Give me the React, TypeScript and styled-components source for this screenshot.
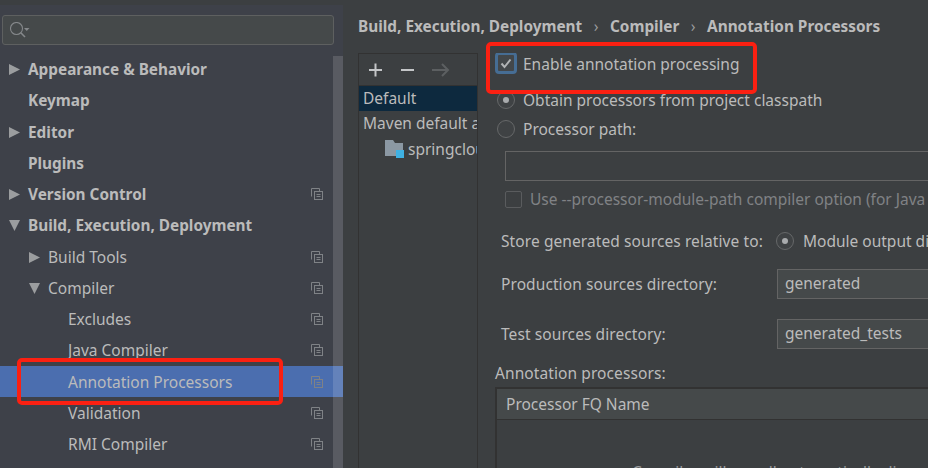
import React from 'react';
import styled, { createGlobalStyle } from 'styled-components';

const GlobalStyle = createGlobalStyle`
  html, body {
    margin: 0;
    padding: 0;
    background: #3c3f41;
  }
  body {
    font-family: "Noto Sans", "Open Sans", sans-serif;
    font-size: 15.5px;
    color: #bbbbbb;
  }
`;

type TreeItem = {
  label: string;
  level: number;
  bold?: boolean;
  arrow?: 'right' | 'down';
  copy?: boolean;
  selected?: boolean;
};

const items: TreeItem[] = [
  { label: 'Appearance & Behavior', level: 0, bold: true, arrow: 'right' },
  { label: 'Keymap', level: 0, bold: true },
  { label: 'Editor', level: 0, bold: true, arrow: 'right' },
  { label: 'Plugins', level: 0, bold: true },
  { label: 'Version Control', level: 0, bold: true, arrow: 'right', copy: true },
  { label: 'Build, Execution, Deployment', level: 0, bold: true, arrow: 'down' },
  { label: 'Build Tools', level: 1, arrow: 'right', copy: true },
  { label: 'Compiler', level: 1, arrow: 'down', copy: true },
  { label: 'Excludes', level: 2, copy: true },
  { label: 'Java Compiler', level: 2, copy: true },
  { label: 'Annotation Processors', level: 2, copy: true, selected: true },
  { label: 'Validation', level: 2, copy: true },
  { label: 'RMI Compiler', level: 2, copy: true },
];

const SearchIcon = () => (
  <svg width="20" height="16" viewBox="0 0 20 16" fill="none">
    <circle cx="6.5" cy="6.5" r="6" stroke="#85888b" strokeWidth="1.1" />
    <path d="M10.8 10.8L15 15" stroke="#85888b" strokeWidth="1.6" />
    <path d="M14 6h5.5l-2.75 3z" fill="#85888b" />
  </svg>
);

const Arrow = ({ dir }: { dir: 'right' | 'down' }) => (
  <svg width="11" height="11" viewBox="0 0 11 11">
    <path d={dir === 'right' ? 'M0 0L11 5.5L0 11z' : 'M0 0H11L5.5 11z'} fill="#9b9d9f" />
  </svg>
);

const CopyIcon = () => (
  <svg width="12" height="12" viewBox="0 0 12 12" fill="none" stroke="#7f8286">
    <path d="M.5 8.5V.5H8.5V3" />
    <rect x="3.5" y="3.5" width="8" height="8" />
    <path d="M5.5 6.5h4M5.5 8.5h4" />
  </svg>
);

const ModuleFolder = () => (
  <FolderSvg width="19" height="18" viewBox="0 0 19 18">
    <path d="M0 0h8l2 3h8v13H0z" fill="#8b98a3" />
    <rect x="11" y="10" width="8" height="8" fill="#3fb1e3" />
  </FolderSvg>
);

const Check = () => (
  <svg width="12" height="11" viewBox="0 0 12 11" fill="none">
    <path d="M1.5 5.5L4.5 9L10.5 1.5" stroke="#b1b3b5" strokeWidth="2" />
  </svg>
);

const App: React.FC = () => (
  <Root>
    <GlobalStyle />
    <Sidebar>
      <SearchBox>
        <SearchIcon />
      </SearchBox>
      <Tree>
        {items.map((item) => (
          <Row key={item.label} $selected={item.selected}>
            <RowLabel $level={item.level} $bold={item.bold}>
              {item.arrow && (
                <ArrowSlot>
                  <Arrow dir={item.arrow} />
                </ArrowSlot>
              )}
              {item.label}
            </RowLabel>
            {item.copy && <CopyIcon />}
          </Row>
        ))}
      </Tree>
      <ScrollThumb />
    </Sidebar>
    <Main>
      <Breadcrumbs>
        <span>Build, Execution, Deployment</span>
        <Sep>›</Sep>
        <span>Compiler</span>
        <Sep>›</Sep>
        <span>Annotation Processors</span>
      </Breadcrumbs>
      <Body>
        <ProfilePanel>
          <Toolbar>
            <svg width="82" height="16" viewBox="0 0 82 16" fill="none">
              <path d="M0 8H13M6.5 1.5V14.5" stroke="#c4c6c8" strokeWidth="2" />
              <path d="M32 8H45" stroke="#c4c6c8" strokeWidth="2" />
              <path d="M63 8H79M73 2L79 8L73 14" stroke="#5c5f61" strokeWidth="2" />
            </svg>
          </Toolbar>
          <ProfileRow $selected>Default</ProfileRow>
          <ProfileRow>Maven default annotation processors</ProfileRow>
          <ModuleRow>
            <ModuleFolder />
            springcloud
          </ModuleRow>
        </ProfilePanel>
        <Form>
          <CheckLine>
            <FocusBox>
              <Check />
            </FocusBox>
            Enable annotation processing
          </CheckLine>
          <RadioGroup>
            <RadioLine>
              <Radio $on />
              Obtain processors from project classpath
            </RadioLine>
            <RadioLine>
              <Radio />
              Processor path:
            </RadioLine>
          </RadioGroup>
          <PathInput />
          <ModulePathLine>
            <SmallBox />
            Use --processor-module-path compiler option (for Java 9 and later)
          </ModulePathLine>
          <StoreLine>
            <FieldLabel>Store generated sources relative to:</FieldLabel>
            <Radio $on />
            <ModuleText>Module output directory</ModuleText>
          </StoreLine>
          <DirLine $top={18}>
            <FieldLabel>Production sources directory:</FieldLabel>
            <DirInput>generated</DirInput>
          </DirLine>
          <DirLine $top={20}>
            <FieldLabel>Test sources directory:</FieldLabel>
            <DirInput>generated_tests</DirInput>
          </DirLine>
          <SectionLabel>Annotation processors:</SectionLabel>
          <Table>
            <TableHead>Processor FQ Name</TableHead>
            <EmptyText>Compiler will run all automatically discovered processors</EmptyText>
          </Table>
        </Form>
      </Body>
    </Main>
    <Marker $x={17} $y={358} $w={266} $h={47} />
    <Marker $x={486} $y={42} $w={271} $h={52} />
  </Root>
);

export default App;

const Root = styled.div`
  position: relative;
  display: flex;
  width: 928px;
  height: 468px;
  overflow: hidden;
  background: #3c3f41;
`;

const Sidebar = styled.div`
  position: relative;
  width: 343px;
  margin-top: 5px;
  padding-top: 10px;
  background: #3e4149;
  flex-shrink: 0;
  box-sizing: border-box;
`;

const SearchBox = styled.div`
  display: flex;
  align-items: center;
  width: 332px;
  height: 30px;
  margin-left: 2px;
  padding-left: 7px;
  box-sizing: border-box;
  background: #45494a;
  border: 1px solid #5e6060;
  border-radius: 3px;
`;

const Tree = styled.div`
  padding-top: 8.4px;
`;

const Row = styled.div<{ $selected?: boolean }>`
  display: flex;
  align-items: center;
  justify-content: space-between;
  height: 31.25px;
  padding-right: 20px;
  white-space: nowrap;
  background: ${(p) => (p.$selected ? '#4b6eaf' : 'transparent')};
`;

const RowLabel = styled.div<{ $level: number; $bold?: boolean }>`
  position: relative;
  margin-left: ${(p) => 28 + p.$level * 20}px;
  font-size: ${(p) => (p.$bold ? 15.35 : 15.5)}px;
  font-weight: ${(p) => (p.$bold ? 700 : 400)};
`;

const ArrowSlot = styled.span`
  position: absolute;
  left: -19px;
  top: 50%;
  margin-top: -5px;
  line-height: 0;
`;

const ScrollThumb = styled.div`
  position: absolute;
  top: 51px;
  bottom: 0;
  right: 0;
  width: 10px;
  background: rgba(255, 255, 255, 0.14);
`;

const Main = styled.div`
  flex: 1;
  min-width: 0;
  display: flex;
  flex-direction: column;
`;

const Breadcrumbs = styled.div`
  display: flex;
  align-items: center;
  height: 53px;
  padding: 0 0 1px 15px;
  box-sizing: border-box;
  font-size: 15.35px;
  font-weight: 700;
  white-space: nowrap;
`;

const Sep = styled.span`
  margin: 0 11.5px;
  font-weight: 400;
  color: #9a9c9e;
`;

const Body = styled.div`
  flex: 1;
  display: flex;
  min-height: 0;
`;

const ProfilePanel = styled.div`
  width: 120px;
  margin-left: 15px;
  flex-shrink: 0;
  border: 1px solid #323232;
  border-bottom: 0;
  overflow: hidden;
  white-space: nowrap;
  box-sizing: border-box;
`;

const Toolbar = styled.div`
  display: flex;
  align-items: center;
  height: 31px;
  padding-left: 10px;
  border-bottom: 1px solid #323232;
`;

const ProfileRow = styled.div<{ $selected?: boolean }>`
  height: 25px;
  line-height: 25px;
  padding-left: 4px;
  background: ${(p) => (p.$selected ? '#0d293e' : 'transparent')};
`;

const FolderSvg = styled.svg`
  flex-shrink: 0;
`;

const ModuleRow = styled.div`
  display: flex;
  align-items: center;
  gap: 4px;
  height: 25px;
  padding-left: 26px;
`;

const Form = styled.div`
  flex: 1;
  min-width: 0;
  padding-left: 17px;
  white-space: nowrap;
  overflow: hidden;
`;

const CheckLine = styled.div`
  display: flex;
  align-items: center;
  gap: 6px;
  height: 22px;
`;

const FocusBox = styled.div`
  display: flex;
  align-items: center;
  justify-content: center;
  width: 22px;
  height: 22px;
  margin-top: -2px;
  box-sizing: border-box;
  background: #43474a;
  border: 3px solid #466d94;
  border-radius: 4px;
`;

const RadioGroup = styled.div`
  margin-top: 10.5px;
`;

const RadioLine = styled.div`
  display: flex;
  align-items: center;
  gap: 8px;
  height: 29px;
  margin-left: 2px;
`;

const Radio = styled.span<{ $on?: boolean }>`
  position: relative;
  display: inline-block;
  width: 18px;
  height: 18px;
  flex-shrink: 0;
  box-sizing: border-box;
  border: 1px solid #666869;
  border-radius: 50%;
  background: #3f4244;
  &::after {
    content: '';
    display: ${(p) => (p.$on ? 'block' : 'none')};
    position: absolute;
    left: 5px;
    top: 5px;
    width: 6px;
    height: 6px;
    border-radius: 50%;
    background: #a9abad;
  }
`;

const PathInput = styled.div`
  height: 30px;
  margin: 7.5px -2px 0 10px;
  box-sizing: border-box;
  border: 1px solid #646464;
  border-right: 0;
`;

const ModulePathLine = styled.div`
  display: flex;
  align-items: center;
  gap: 8px;
  height: 18px;
  margin: 9px 0 0 10px;
  color: #808285;
`;

const SmallBox = styled.span`
  width: 17px;
  height: 17px;
  box-sizing: border-box;
  border: 1px solid #5a5c5e;
  border-radius: 2px;
  flex-shrink: 0;
`;

const StoreLine = styled.div`
  display: flex;
  align-items: center;
  height: 20px;
  margin: 23px 0 0 6px;
`;

const FieldLabel = styled.span`
  width: 275px;
  flex-shrink: 0;
  letter-spacing: 0.09px;
`;

const ModuleText = styled.span`
  margin-left: 9px;
`;

const DirLine = styled.div<{ $top: number }>`
  display: flex;
  align-items: center;
  height: 30px;
  margin: ${(p) => p.$top}px 0 0 6px;
`;

const DirInput = styled.div`
  flex: 1;
  height: 30px;
  line-height: 27px;
  margin-left: 1px;
  padding-left: 7px;
  box-sizing: border-box;
  border: 1px solid #646464;
  border-right: 0;
  background: #45494a;
`;

const SectionLabel = styled.div`
  height: 20px;
  line-height: 20px;
  margin-top: 14px;
  letter-spacing: 0.09px;
`;

const Table = styled.div`
  height: 90px;
  margin-top: 4px;
  box-sizing: border-box;
  border-top: 2px solid #323232;
  border-left: 2px solid #323232;
  overflow: hidden;
`;

const TableHead = styled.div`
  height: 31px;
  line-height: 30px;
  padding-left: 9px;
  box-sizing: border-box;
  background: #45494a;
  border-bottom: 1px solid #323232;
`;

const EmptyText = styled.div`
  margin: 41px 0 0 135px;
  color: #9a9c9e;
`;

const Marker = styled.div<{ $x: number; $y: number; $w: number; $h: number }>`
  position: absolute;
  left: ${(p) => p.$x}px;
  top: ${(p) => p.$y}px;
  width: ${(p) => p.$w}px;
  height: ${(p) => p.$h}px;
  box-sizing: border-box;
  border: 4px solid #fb2012;
  border-radius: 5px;
`;
